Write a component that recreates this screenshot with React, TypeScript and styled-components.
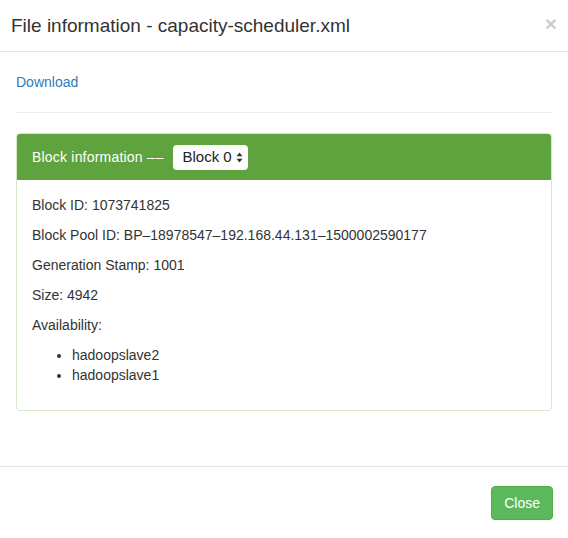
import React from "react";
import styled, { createGlobalStyle } from "styled-components";

const Global = createGlobalStyle`
  html, body { margin: 0; padding: 0; background: #fff; }
  body {
    font-family: "Liberation Sans", Arial, Helvetica, sans-serif;
    font-size: 14px;
    line-height: 20px;
    color: #333;
  }
  * { box-sizing: border-box; }
`;

const Modal = styled.div`
  width: 568px;
  height: 538px;
  display: flex;
  flex-direction: column;
  background: #fff;
`;

const Header = styled.div`
  height: 52px;
  padding: 0 11px;
  border-bottom: 1px solid #e5e5e5;
  display: flex;
  align-items: center;
  justify-content: space-between;
`;

const Title = styled.h4`
  margin: 0;
  font-size: 19px;
  font-weight: 500;
  line-height: 25px;
  color: #333;
`;

const CloseX = styled.button`
  border: 0;
  background: transparent;
  padding: 0;
  margin: 0 0 4px 0;
  font-family: "Liberation Sans", Arial, sans-serif;
  font-size: 21px;
  font-weight: bold;
  line-height: 1;
  color: #000;
  opacity: 0.2;
  cursor: pointer;
`;

const Body = styled.div`
  flex: 1;
  padding: 20px 16px 0 16px;
`;

const Link = styled.a`
  color: #337ab7;
  text-decoration: none;
  display: block;
  line-height: 20px;
`;

const Rule = styled.hr`
  margin: 20px 0;
  border: 0;
  border-top: 1px solid #eee;
`;

const Panel = styled.div`
  border: 1px solid #d6e9c6;
  border-radius: 4px;
  overflow: hidden;
`;

const PanelHeading = styled.div`
  height: 46px;
  padding: 0 15px;
  background: #5fa33e;
  color: #fff;
  display: flex;
  align-items: center;
  gap: 6px;
`;

const HeadingText = styled.span`
  letter-spacing: 0.2px;
  margin-right: 3px;
`;

const Dashes = styled.span`
  letter-spacing: 1px;
`;

const Select = styled.span`
  height: 25px;
  width: 75px;
  background: #fff;
  color: #222;
  border-radius: 4px;
  display: inline-flex;
  align-items: center;
  justify-content: space-between;
  padding: 0 5px 0 9px;
  font-size: 15px;
`;

const PanelBody = styled.div`
  padding: 15px;
`;

const Line = styled.p`
  margin: 0 0 10px 0;
`;

const List = styled.ul`
  margin: 0 0 10px 0;
  padding-left: 40px;
`;

const Footer = styled.div`
  border-top: 1px solid #e5e5e5;
  padding: 19px 15px 18px;
  display: flex;
  justify-content: flex-end;
`;

const Button = styled.button`
  height: 34px;
  padding: 0 12px;
  font-family: "Liberation Sans", Arial, sans-serif;
  font-size: 14px;
  color: #fff;
  background: #5cb85c;
  border: 1px solid #4cae4c;
  border-radius: 4px;
  cursor: pointer;
`;

const Arrows = () => (
  <svg width="7" height="11" viewBox="0 0 7 11">
    <path d="M3.5 0.5 L6.5 4.3 L0.5 4.3 Z" fill="#333" />
    <path d="M3.5 10.5 L6.5 6.7 L0.5 6.7 Z" fill="#333" />
  </svg>
);

export default function App() {
  return (
    <>
      <Global />
      <Modal>
        <Header>
          <Title>File information - capacity-scheduler.xml</Title>
          <CloseX aria-label="Close">×</CloseX>
        </Header>
        <Body>
          <Link href="#">Download</Link>
          <Rule />
          <Panel>
            <PanelHeading>
              <HeadingText>
                Block information <Dashes>––</Dashes>
              </HeadingText>
              <Select>
                <span>Block 0</span>
                <Arrows />
              </Select>
            </PanelHeading>
            <PanelBody>
              <Line>Block ID: 1073741825</Line>
              <Line>Block Pool ID: BP–18978547–192.168.44.131–1500002590177</Line>
              <Line>Generation Stamp: 1001</Line>
              <Line>Size: 4942</Line>
              <Line>Availability:</Line>
              <List>
                <li>hadoopslave2</li>
                <li>hadoopslave1</li>
              </List>
            </PanelBody>
          </Panel>
        </Body>
        <Footer>
          <Button>Close</Button>
        </Footer>
      </Modal>
    </>
  );
}
